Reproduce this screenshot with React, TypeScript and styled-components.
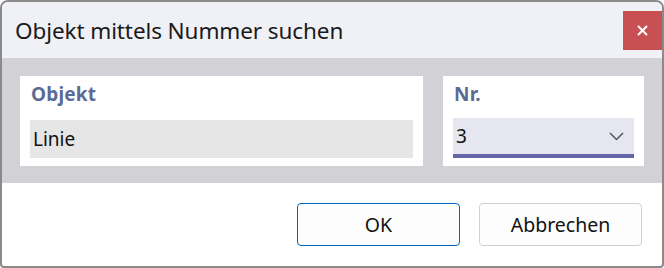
import React from "react";
import styled, { createGlobalStyle } from "styled-components";

const Global = createGlobalStyle`
  html, body { margin: 0; padding: 0; background: #ffffff; }
  body { font-family: "Noto Sans", "Open Sans", sans-serif; }
  * { box-sizing: border-box; }
`;

const Window = styled.div`
  width: 664px;
  height: 268px;
  border: 2px solid #8a8a8a;
  border-radius: 8px 8px 4px 4px;
  background: #ffffff;
  overflow: hidden;
  display: flex;
  flex-direction: column;
`;

const TitleBar = styled.div`
  height: 56px;
  background: #f0f1f6;
  display: flex;
  align-items: center;
  justify-content: space-between;
  padding-left: 13px;
`;

const Title = styled.div`
  font-size: 22.5px;
  color: #1a1a1a;
  letter-spacing: -0.1px;
`;

const CloseButton = styled.div`
  width: 39px;
  height: 39px;
  margin-top: 1px;
  background: #c85052;
  color: #ffffff;
  display: flex;
  align-items: center;
  justify-content: center;
`;

const Body = styled.div`
  background: #d2d2d6;
  height: 125px;
  display: flex;
  gap: 20px;
  padding: 18px 16px 17px 18px;
`;

const Panel = styled.div<{ $width: number }>`
  width: ${(p) => p.$width}px;
  background: #ffffff;
  padding: 5px 10px 8px 10px;
  display: flex;
  flex-direction: column;
`;

const Label = styled.div`
  font-size: 19px;
  font-weight: 700;
  color: #5b6b94;
  height: 39px;
  padding-left: 1px;
  letter-spacing: 0.2px;
`;

const Field = styled.div<{ $combo?: boolean }>`
  height: ${(p) => (p.$combo ? 41 : 38)}px;
  background: ${(p) => (p.$combo ? "#e6e6f0" : "#e6e6e6")};
  border-bottom: ${(p) => (p.$combo ? "4px solid #6466a8" : "none")};
  display: flex;
  align-items: center;
  justify-content: space-between;
  padding: 0 10px 0 3px;
  font-size: 19px;
  color: #111111;
`;

const Footer = styled.div`
  flex: 1;
  display: flex;
  justify-content: flex-end;
  align-items: flex-start;
  gap: 19px;
  padding: 20px 20px 0 0;
`;

const Button = styled.button<{ $primary?: boolean }>`
  width: 163px;
  height: 43px;
  border-radius: 4px;
  background: #fdfdfd;
  border: 1px solid ${(p) => (p.$primary ? "#0067c0" : "#d0d0d0")};
  font-family: "Noto Sans", "Open Sans", sans-serif;
  font-size: 19.5px;
  color: #111111;
`;

export default function App() {
  return (
    <>
      <Global />
      <Window>
        <TitleBar>
          <Title>Objekt mittels Nummer suchen</Title>
          <CloseButton>
            <svg width="11" height="11" viewBox="0 0 11 11">
              <path d="M1 1L10 10M10 1L1 10" stroke="#ffffff" strokeWidth="2" />
            </svg>
          </CloseButton>
        </TitleBar>
        <Body>
          <Panel $width={403}>
            <Label>Objekt</Label>
            <Field>Linie</Field>
          </Panel>
          <Panel $width={201}>
            <Label>Nr.</Label>
            <Field $combo>
              3
              <svg width="15" height="9" viewBox="0 0 15 9">
                <path d="M1 1L7.5 7.5L14 1" stroke="#555555" strokeWidth="1.5" fill="none" />
              </svg>
            </Field>
          </Panel>
        </Body>
        <Footer>
          <Button $primary>OK</Button>
          <Button>Abbrechen</Button>
        </Footer>
      </Window>
    </>
  );
}
